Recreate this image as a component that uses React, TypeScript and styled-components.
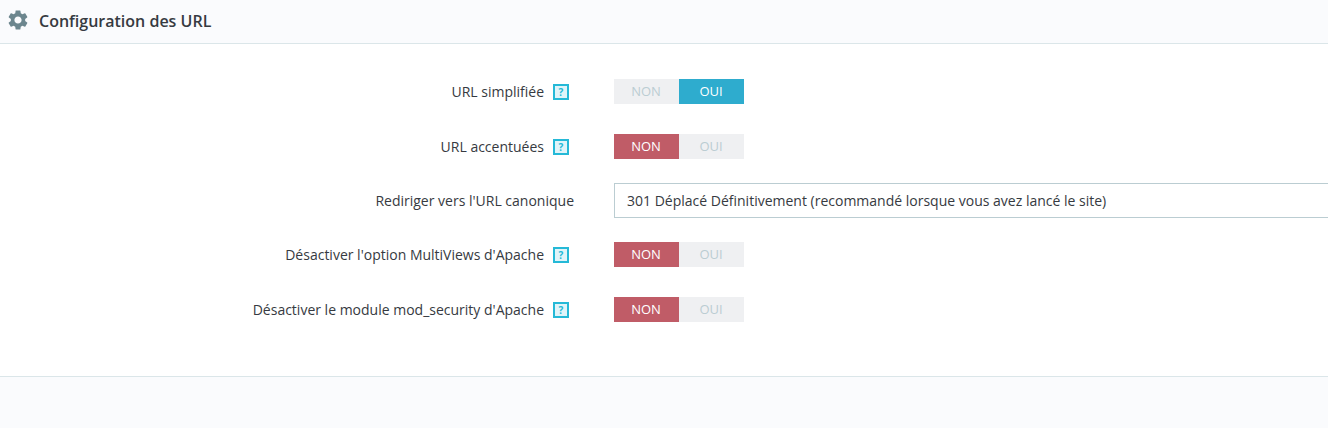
import React, { useState } from "react";
import styled, { createGlobalStyle } from "styled-components";
import { MdSettings } from "react-icons/md";

const GlobalStyle = createGlobalStyle`
  *, *::before, *::after { box-sizing: border-box; }
  html { height: 100%; }
  body {
    margin: 0;
    min-height: 100%;
    background: #fafbfd;
    color: #363a41;
    font-family: "Open Sans", "Noto Sans", sans-serif;
    font-size: 14px;
    line-height: 20px;
  }
`;

const Card = styled.form`
  display: flex;
  flex-direction: column;
`;

const CardHeader = styled.header`
  display: flex;
  align-items: flex-start;
  gap: 9px;
  padding: 8px 6px 9px;
  border-bottom: 1px solid #dbe6e9;
  background: #fafbfd;
`;

const GearIcon = styled(MdSettings)`
  flex: none;
  width: 24px;
  height: 24px;
  color: #6c868e;
`;

const Title = styled.h1`
  margin: 0;
  font-size: 16px;
  font-weight: 600;
  line-height: 26px;
`;

const CardBody = styled.div`
  display: flex;
  flex-direction: column;
  padding: 20px 0 39px;
  background: #fff;
`;

const CardFooter = styled.footer`
  min-height: 52px;
  border-top: 1px solid #dbe6e9;
  background: #fafbfd;
`;

const Row = styled.div<{ $tall?: boolean }>`
  display: grid;
  grid-template-columns: minmax(0, 574fr) minmax(0, 714fr);
  column-gap: 40px;
  align-items: center;
  margin: ${(p) => (p.$tall ? "9px 0" : "15px 0")};
`;

const LabelCell = styled.div`
  display: flex;
  align-items: center;
  justify-content: flex-end;
  text-align: right;
`;

const HelpButton = styled.button`
  display: flex;
  align-items: center;
  justify-content: center;
  flex: none;
  width: 16px;
  height: 16px;
  margin: 0 5px 0 9px;
  padding: 0;
  border: 2px solid #25b9d7;
  background: #e0f4f9;
  color: #25b9d7;
  font-family: "Open Sans", sans-serif;
  font-size: 10px;
  font-weight: 700;
  line-height: 12px;
  cursor: help;
`;

const Switch = styled.div`
  display: flex;
  width: 130px;
  height: 25px;
  background: #eff0f2;
`;

const Choice = styled.label<{ $active: boolean; $color: string }>`
  display: flex;
  align-items: flex-start;
  justify-content: center;
  flex: 1;
  padding-right: 1px;
  background: ${(p) => (p.$active ? p.$color : "transparent")};
  color: ${(p) => (p.$active ? "#fff" : "#bbcdd2")};
  font-size: 13px;
  font-weight: 500;
  line-height: 24px;
  cursor: pointer;
`;

const HiddenRadio = styled.input`
  appearance: none;
  width: 0;
  height: 0;
  margin: 0;
`;

const Select = styled.select`
  appearance: none;
  width: 100%;
  height: 35px;
  padding: 0 12px;
  border: 1px solid #bbcdd2;
  border-right: 0;
  border-radius: 0;
  background: #fff;
  color: #363a41;
  font: inherit;
`;

type SwitchRowProps = { name: string; label: string; initial: boolean };

function SwitchRow({ name, label, initial }: SwitchRowProps) {
  const [on, setOn] = useState(initial);
  const labelId = `${name}-label`;
  return (
    <Row>
      <LabelCell>
        <span id={labelId}>{label}</span>
        <HelpButton type="button" aria-label={`Aide : ${label}`}>?</HelpButton>
      </LabelCell>
      <Switch role="radiogroup" aria-labelledby={labelId}>
        <Choice $active={!on} $color="#c05c67">
          <HiddenRadio type="radio" name={name} checked={!on} onChange={() => setOn(false)} />
          NON
        </Choice>
        <Choice $active={on} $color="#2eacce">
          <HiddenRadio type="radio" name={name} checked={on} onChange={() => setOn(true)} />
          OUI
        </Choice>
      </Switch>
    </Row>
  );
}

export default function App() {
  return (
    <>
      <GlobalStyle />
      <Card>
        <CardHeader>
          <GearIcon aria-hidden />
          <Title>Configuration des URL</Title>
        </CardHeader>
        <CardBody>
          <SwitchRow name="friendly-url" label="URL simplifiée" initial={true} />
          <SwitchRow name="accented-url" label="URL accentuées" initial={false} />
          <Row $tall>
            <LabelCell>
              <label htmlFor="canonical">Rediriger vers l'URL canonique</label>
            </LabelCell>
            <Select id="canonical" defaultValue="301">
              <option value="301">
                301 Déplacé Définitivement (recommandé lorsque vous avez lancé le site)
              </option>
            </Select>
          </Row>
          <SwitchRow name="multiviews" label="Désactiver l'option MultiViews d'Apache" initial={false} />
          <SwitchRow name="mod-security" label="Désactiver le module mod_security d'Apache" initial={false} />
        </CardBody>
        <CardFooter />
      </Card>
    </>
  );
}
